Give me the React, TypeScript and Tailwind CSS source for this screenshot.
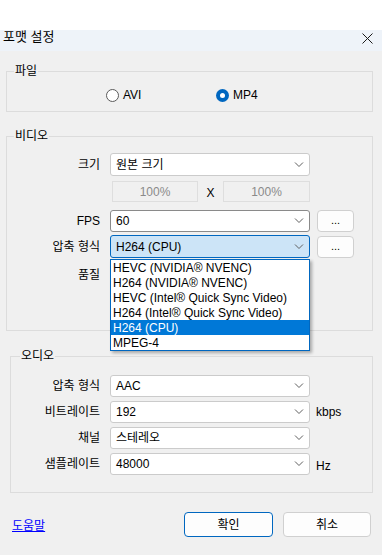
const FONT = "font-['Liberation_Sans','Noto_Sans_CJK_KR',sans-serif]";

function Chevron() {
  return (
    <svg width="10" height="6" viewBox="0 0 10 6" fill="none" stroke="#5f5f5f" strokeWidth="1">
      <path d="M1 0.5L5 4.5L9 0.5" />
    </svg>
  );
}

function Combo({ value, active = false, h = 'h-[23px]' }: { value: string; active?: boolean; h?: string }) {
  return (
    <div
      className={`${h} w-[200px] flex items-center justify-between pl-[5px] pr-[5px] rounded-[3px] border ${
        active ? 'bg-[#cce4f7] border-[#0067c0]' : 'bg-white border-[#cbcbcb]'
      }`}
    >
      <span className="text-[12px] text-black leading-none">{value}</span>
      <Chevron />
    </div>
  );
}

function Label({ text, w = 'w-[94px]' }: { text: string; w?: string }) {
  return <div className={`${w} text-right text-[12px] text-black leading-none pr-[1px]`}>{text}</div>;
}

function Radio({ checked, label }: { checked: boolean; label: string }) {
  return (
    <div className="flex items-center gap-[4px]">
      {checked ? (
        <div className="w-[13px] h-[13px] rounded-full bg-[#0067c0] flex items-center justify-center">
          <div className="w-[5px] h-[5px] rounded-full bg-white" />
        </div>
      ) : (
        <div className="w-[13px] h-[13px] rounded-full border border-[#5a5a5a] bg-white" />
      )}
      <span className="text-[12px] text-black leading-none">{label}</span>
    </div>
  );
}

function Legend({ text, left = 'left-[7px]' }: { text: string; left?: string }) {
  return (
    <span className={`absolute -top-[8px] ${left} px-[1px] bg-[#f0f0f0] text-[12px] leading-[14px] text-black`}>
      {text}
    </span>
  );
}

function SmallButton() {
  return (
    <div className="ml-[7px] w-[37px] h-[22px] rounded-[4px] border border-[#d0d0d0] bg-[#fdfdfd] flex items-end justify-center pb-[5px] text-[11px] leading-none text-black">
      ...
    </div>
  );
}

const options = [
  'HEVC (NVIDIA® NVENC)',
  'H264 (NVIDIA® NVENC)',
  'HEVC (Intel® Quick Sync Video)',
  'H264 (Intel® Quick Sync Video)',
  'H264 (CPU)',
  'MPEG-4',
];

export default function App() {
  return (
    <div className={`w-[382px] h-[555px] flex flex-col bg-[#f0f0f0] overflow-hidden ${FONT}`}>
      <div className="h-[30px] bg-white" />

      {/* title bar */}
      <div className="h-[21px] bg-[#eef3f9] flex items-start justify-between">
        <span className="pl-[3px] text-[13px] leading-[14px] text-black">포맷 설정</span>
        <svg width="11" height="11" viewBox="0 0 11 11" className="mt-[3px] mr-[9px]" stroke="#1a1a1a" strokeWidth="1">
          <path d="M0.5 0.5L10.5 10.5M10.5 0.5L0.5 10.5" />
        </svg>
      </div>

      {/* 파일 */}
      <div className="relative mt-[20px] ml-[6px] w-[367px] h-[41px] border border-[#dcdcdc] flex items-center pt-[7px]">
        <Legend text="파일" />
        <div className="ml-[99px] w-[110px]">
          <Radio checked={false} label="AVI" />
        </div>
        <Radio checked label="MP4" />
      </div>

      {/* 비디오 */}
      <div className="relative mt-[24px] ml-[6px] w-[367px] h-[195px] border border-[#dcdcdc] flex flex-col pt-[16px]">
        <Legend text="비디오" />
        <div className="flex items-center gap-[9px]">
          <Label text="크기" />
          <Combo value="원본 크기" />
        </div>
        <div className="flex items-center mt-[5px] ml-[105px]">
          <div className="w-[86px] h-[21px] border border-[#dedede] flex items-center justify-center text-[12px] text-[#8a8a8a] leading-none">
            100%
          </div>
          <div className="w-[25px] text-center text-[12px] text-black leading-none pt-[2px]">X</div>
          <div className="w-[87px] h-[21px] border border-[#dedede] flex items-center justify-center text-[12px] text-[#8a8a8a] leading-none">
            100%
          </div>
        </div>
        <div className="flex items-center gap-[9px] mt-[8px]">
          <Label text="FPS" />
          <div className="flex items-center">
            <div className="h-[22px] w-[200px] flex items-center justify-between px-[5px] rounded-[3px] border border-[#8a8a8a] bg-white">
              <span className="text-[12px] text-black leading-none">60</span>
              <Chevron />
            </div>
            <SmallButton />
          </div>
        </div>
        <div className="flex items-center gap-[9px] mt-[3px]">
          <Label text="압축 형식" />
          <div className="flex items-center">
            <Combo value="H264 (CPU)" active />
            <SmallButton />
          </div>
        </div>
        <div className="flex items-center gap-[9px] mt-[11px]">
          <Label text="품질" />
        </div>

        {/* open dropdown list */}
        <div className="absolute left-[103px] top-[122px] z-10 w-[200px] border border-[#0067c0] bg-white shadow-[2px_2px_3px_rgba(0,0,0,0.3)]">
          {options.map((o) => (
            <div
              key={o}
              className={`h-[15px] pl-[2px] flex items-center text-[12px] leading-none ${
                o === 'H264 (CPU)' ? 'bg-[#0078d7] text-white' : 'text-black'
              }`}
            >
              {o}
            </div>
          ))}
        </div>
      </div>

      {/* 오디오 */}
      <div className="relative mt-[25px] ml-[10px] w-[363px] h-[137px] border border-[#dcdcdc] flex flex-col pt-[18px] gap-[4px]">
        <Legend text="오디오" left="left-[9px]" />
        <div className="flex items-center gap-[9px]">
          <Label text="압축 형식" w="w-[90px]" />
          <Combo value="AAC" h="h-[22px]" />
        </div>
        <div className="flex items-center gap-[9px]">
          <Label text="비트레이트" w="w-[90px]" />
          <Combo value="192" h="h-[22px]" />
          <span className="ml-[-3px] text-[12px] text-black leading-none">kbps</span>
        </div>
        <div className="flex items-center gap-[9px]">
          <Label text="채널" w="w-[90px]" />
          <Combo value="스테레오" h="h-[22px]" />
        </div>
        <div className="flex items-center gap-[9px]">
          <Label text="샘플레이트" w="w-[90px]" />
          <Combo value="48000" h="h-[22px]" />
          <span className="ml-[-3px] mt-[4px] text-[12px] text-black leading-none">Hz</span>
        </div>
      </div>

      {/* buttons */}
      <div className="flex items-center mt-[19px] pl-[12px]">
        <a href="#" className="text-[12px] leading-none text-[#0000ff] underline mt-[2px]">
          도움말
        </a>
        <div className="ml-auto flex gap-[10px] mr-[11px]">
          <button className="w-[89px] h-[25px] rounded-[4px] border border-[#0067c0] bg-[#fdfdfd] text-[12px] text-black">
            확인
          </button>
          <button className="w-[88px] h-[25px] rounded-[4px] border border-[#d0d0d0] bg-[#fdfdfd] text-[12px] text-black">
            취소
          </button>
        </div>
      </div>
    </div>
  );
}
